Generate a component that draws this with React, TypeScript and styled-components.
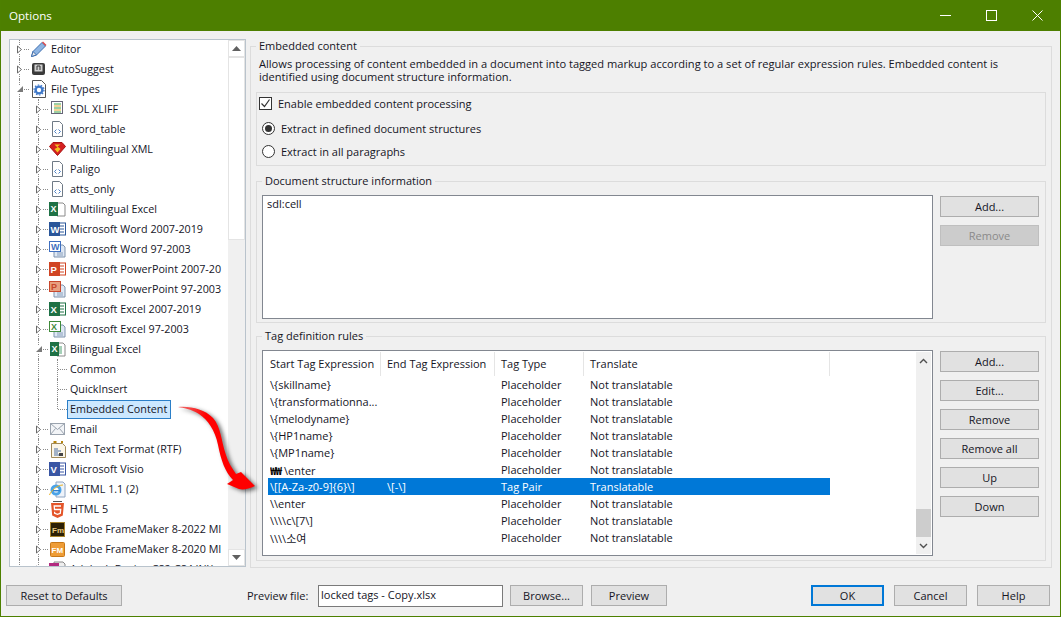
import React from "react";
import styled, { createGlobalStyle } from "styled-components";

const GlobalStyle = createGlobalStyle`
  html, body {
    margin: 0;
    padding: 0;
    background: #f0f0f0;
  }
  * {
    box-sizing: border-box;
  }
`;

const Window = styled.div`
  position: relative;
  width: 1061px;
  height: 617px;
  display: flex;
  flex-direction: column;
  overflow: hidden;
  background: #f0f0f0;
  border: 1px solid #4d8000;
  border-top: 0;
  font-family: "Open Sans", "Noto Sans CJK KR", sans-serif;
  font-size: 11px;
  color: #15151f;
`;

const TitleBar = styled.div`
  height: 31px;
  flex: none;
  display: flex;
  align-items: center;
  justify-content: space-between;
  background: #4d7f00;
  color: #fff;
  padding-left: 8px;
  font-size: 11.6px;
`;

const WinControls = styled.div`
  display: flex;
  height: 100%;
`;

const WinControl = styled.div`
  width: 46px;
  height: 100%;
  display: flex;
  align-items: center;
  justify-content: center;
`;

const Main = styled.div`
  flex: none;
  display: flex;
  gap: 4px;
  padding: 8px 8px 0;
  height: 536px;
`;

const Tree = styled.div`
  width: 237px;
  height: 528px;
  flex: none;
  display: flex;
  background: #fff;
  border: 1px solid #b9c3cc;
  overflow: hidden;
`;

const TreeList = styled.div`
  flex: 1;
  min-width: 0;
  margin-top: -1px;
  overflow: hidden;
  font-size: 10.75px;
`;

const TreeRow = styled.div`
  height: 20px;
  display: flex;
  align-items: center;
  white-space: nowrap;
`;

const Indent = styled.span`
  position: relative;
  width: 19px;
  height: 100%;
  flex: none;
  &::before {
    content: "";
    position: absolute;
    left: 9px;
    top: 0;
    bottom: 0;
    border-left: 1px dotted #8a8a8a;
  }
`;

const Expander = styled.span<{ $last?: boolean }>`
  position: relative;
  width: 19px;
  height: 100%;
  flex: none;
  display: flex;
  align-items: center;
  justify-content: center;
  &::before {
    content: "";
    position: absolute;
    left: 9px;
    top: 0;
    bottom: ${(p) => (p.$last ? "50%" : "0")};
    border-left: 1px dotted #8a8a8a;
  }
  &::after {
    content: "";
    position: absolute;
    left: 10px;
    right: 0;
    top: 50%;
    border-top: 1px dotted #8a8a8a;
  }
  svg {
    position: relative;
    z-index: 1;
    background: #fff;
  }
`;

const IconSlot = styled.span`
  width: 17px;
  height: 18px;
  margin-left: 1px;
  flex: none;
  display: flex;
  align-items: center;
  justify-content: center;
`;

const RowLabel = styled.span<{ $selected?: boolean; $leaf?: boolean }>`
  margin-left: ${(p) => (p.$leaf ? "0" : "1px")};
  padding: ${(p) => (p.$selected ? "0 3px 0 2px" : "0 2px")};
  line-height: 16px;
  height: 19px;
  border: 1px solid ${(p) => (p.$selected ? "#2b7fc8" : "transparent")};
  background: ${(p) => (p.$selected ? "#cce8ff" : "transparent")};
`;

const VScroll = styled.div`
  width: 17px;
  flex: none;
  display: flex;
  flex-direction: column;
  background: #f0f0f0;
`;

const ScrollBtn = styled.div`
  height: 17px;
  flex: none;
  background: #fff;
  border: 1px solid #e4e4e4;
  display: flex;
  align-items: center;
  justify-content: center;
`;

const ScrollThumb = styled.div`
  height: 183px;
  flex: none;
  background: #fff;
  border: 1px solid #e4e4e4;
`;

const ScrollTrack = styled.div`
  flex: 1;
`;

const Group = styled.fieldset<{ $h: number; $gap?: number }>`
  margin: ${(p) => p.$gap ?? 0}px 0 0;
  min-width: 0;
  height: ${(p) => p.$h}px;
  padding: 0 5px;
  border: 1px solid #dcdcdc;
  display: block;
`;

const Legend = styled.legend`
  margin-left: 0;
  padding: 0 3px;
  line-height: 14px;
`;

const RightPanel = styled.div`
  flex: 1;
  min-width: 0;
`;

const Description = styled.p`
  margin: 0 0 7px 3px;
  padding-top: 4px;
  line-height: 13px;
  height: 32px;
  font-size: 11.1px;
`;

const OptionsBox = styled.div`
  height: 74px;
  border: 1px solid #dcdcdc;
  padding: 0 0 0 2px;
  margin-bottom: 8px;
`;

const OptionRow = styled.label<{ $radio?: boolean }>`
  height: ${(p) => (p.$radio ? "23px" : "21px")};
  margin-bottom: ${(p) => (p.$radio ? "0" : "3px")};
  display: flex;
  align-items: center;
  gap: 6px;
  padding-left: ${(p) => (p.$radio ? "3px" : "0")};
`;

const CheckBox = styled.span`
  width: 13px;
  height: 13px;
  border: 1px solid #333;
  background: #fff;
  display: flex;
  align-items: center;
  justify-content: center;
`;

const Radio = styled.span<{ $on?: boolean }>`
  width: 13px;
  height: 13px;
  border-radius: 50%;
  border: 1px solid #333;
  background: #fff;
  display: flex;
  align-items: center;
  justify-content: center;
  &::after {
    content: "";
    width: 7px;
    height: 7px;
    border-radius: 50%;
    background: ${(p) => (p.$on ? "#333" : "transparent")};
  }
`;

const GroupBody = styled.div`
  display: flex;
  gap: 7px;
  padding-top: 7px;
`;

const TextBox = styled.div`
  width: 671px;
  height: 124px;
  flex: none;
  background: #fff;
  border: 1px solid #828790;
  padding: 0 4px;
  line-height: 15px;
`;

const ButtonColumn = styled.div`
  display: flex;
  flex-direction: column;
  gap: 8px;
  padding-top: 1px;
`;

const DialogButton = styled.button<{ $w?: number; $primary?: boolean }>`
  width: ${(p) => p.$w ?? 99}px;
  height: 21px;
  flex: none;
  padding: 0;
  background: #e1e1e1;
  border: 1px solid ${(p) => (p.$primary ? "#0078d7" : "#adadad")};
  box-shadow: ${(p) => (p.$primary ? "inset 0 0 0 1px #0078d7" : "none")};
  color: #15151f;
  font: inherit;
  &:disabled {
    background: #cccccc;
    border-color: #bfbfbf;
    color: #8a8a8a;
  }
`;

const RulesBox = styled.div`
  width: 671px;
  height: 206px;
  flex: none;
  display: flex;
  background: #fff;
  border: 1px solid #828790;
  padding: 1px 0;
`;

const RulesTable = styled.div`
  flex: 1;
  min-width: 0;
`;

const RulesHead = styled.div`
  display: grid;
  grid-template-columns: 118px 114px 89px 246px;
  height: 24px;
  align-items: stretch;
`;

const HeadCell = styled.div<{ $first?: boolean }>`
  display: flex;
  align-items: center;
  padding-left: ${(p) => (p.$first ? "7px" : "6px")};
  padding-bottom: 2px;
  border-right: 1px solid #e5e5e5;
  white-space: nowrap;
`;

const RuleRow = styled.div<{ $selected?: boolean }>`
  display: grid;
  grid-template-columns: 113px 114px 89px 246px;
  height: 17px;
  margin-left: 5px;
  width: 562px;
  align-items: center;
  white-space: nowrap;
  background: ${(p) => (p.$selected ? "#0078d7" : "transparent")};
  color: ${(p) => (p.$selected ? "#fff" : "inherit")};
`;

const RuleCell = styled.span<{ $first?: boolean }>`
  padding-left: ${(p) => (p.$first ? "2px" : "6px")};
  overflow: hidden;
`;

const WonMark = styled.span`
  display: inline-block;
  width: 14px;
  font-weight: 700;
  letter-spacing: -1px;
  color: #000;
  overflow: hidden;
  vertical-align: bottom;
`;

const ListScroll = styled.div`
  width: 15px;
  margin-right: 1px;
  flex: none;
  display: flex;
  flex-direction: column;
  background: #f0f0f0;
`;

const ListScrollBtn = styled.div`
  height: 17px;
  flex: none;
  display: flex;
  align-items: center;
  justify-content: center;
`;

const ListScrollTrack = styled.div`
  flex: 1;
  display: flex;
  flex-direction: column;
  justify-content: flex-end;
`;

const ListScrollThumb = styled.div`
  height: 28px;
  background: #cdcdcd;
`;

const Footer = styled.div`
  flex: 1;
  display: flex;
  align-items: flex-start;
  padding: 18px 10px 0 5px;
`;

const ResetButton = styled(DialogButton)`
  width: 116px;
`;

const PreviewArea = styled.div`
  display: flex;
  align-items: flex-start;
  margin-left: 125px;
  gap: 7px;
`;

const PreviewLabel = styled.span`
  width: 64px;
  line-height: 21px;
`;

const PreviewInput = styled.div`
  width: 185px;
  height: 22px;
  background: #fff;
  border: 1px solid #7a7a7a;
  padding-left: 2px;
  line-height: 17px;
`;

const PreviewButtons = styled.div`
  display: flex;
  gap: 8px;
`;

const DialogActions = styled.div`
  display: flex;
  gap: 10px;
  margin-left: auto;
`;

const CurvedArrow = styled.svg`
  position: absolute;
  left: 170px;
  top: 400px;
  z-index: 5;
  filter: drop-shadow(3px 2px 2px rgba(0, 0, 0, 0.55));
`;

type IconKind =
  | "pencil" | "key" | "gear" | "xliff" | "xml" | "shield" | "mlexcel" | "word" | "word97"
  | "ppt" | "ppt97" | "excel" | "excel97" | "biexcel" | "mail" | "rtf" | "visio" | "ie"
  | "html5" | "fm" | "fm2" | "indd";

const DocBack = () => (
  <path d="M2.5 .5h7l3 3v12h-10z" fill="#fff" stroke="#6f7a86" />
);

const TreeIcon: React.FC<{ kind: IconKind }> = ({ kind }) => {
  switch (kind) {
    case "pencil":
      return (
        <svg width="17" height="17" viewBox="0 0 17 17">
          <path d="M1.5 15.5l1.5-5L12 1.5l3.5 3.5-9 9z" fill="#8db4e2" stroke="#3f6fb0" />
          <path d="M1.5 15.5l1.5-5 3.5 3.5z" fill="#e8e8e8" stroke="#3f6fb0" />
          <path d="M12 1.5l3.5 3.5 1-1-3.5-3.5z" fill="#d9484c" />
        </svg>
      );
    case "key":
      return (
        <svg width="16" height="16" viewBox="0 0 16 16">
          <rect x="1" y="2" width="13" height="12" rx="2" fill="#3a3a3a" />
          <rect x="3.5" y="3.5" width="8" height="7" fill="#cfcfcf" />
          <path d="M6 9V5h3v4" fill="none" stroke="#333" />
        </svg>
      );
    case "gear":
      return (
        <svg width="16" height="18" viewBox="0 0 16 18">
          <path d="M1.5 .5h9l4 4v13h-13z" fill="#fff" stroke="#555" />
          <circle cx="8" cy="10" r="3.4" fill="none" stroke="#3f78c8" strokeWidth="2.4" />
          <circle cx="8" cy="10" r="5" fill="none" stroke="#3f78c8" strokeWidth="1.2" strokeDasharray="1.5 1.6" />
        </svg>
      );
    case "xliff":
      return (
        <svg width="14" height="16" viewBox="0 0 14 16">
          <rect x=".5" y=".5" width="11" height="12" fill="#fff" stroke="#667" />
          <path d="M3 3h7" stroke="#3aa048" />
          <path d="M3 5h7" stroke="#e8a82c" />
          <path d="M3 7h7" stroke="#3aa048" />
          <path d="M3 9h7" stroke="#e8a82c" />
          <path d="M3 11h7" stroke="#3aa048" />
        </svg>
      );
    case "xml":
      return (
        <svg width="15" height="16" viewBox="0 0 15 16">
          <DocBack />
          <path d="M6.5 8.5l-2 2 2 2M8.5 8.5l2 2-2 2" fill="none" stroke="#4a7fc4" />
        </svg>
      );
    case "shield":
      return (
        <svg width="17" height="14" viewBox="0 0 17 14">
          <path d="M4 .5h9l3.5 4L8.5 13.5.5 4.5z" fill="#d42020" stroke="#a81010" />
          <path d="M5.5 2.5h6L8.5 4.5l3 2.5-3 3.5L5.5 7l3-1.5z" fill="#f4c020" />
        </svg>
      );
    case "mlexcel":
    case "biexcel":
      return (
        <svg width="17" height="16" viewBox="0 0 17 16">
          <path d="M8 2h6l2 2v11H8z" fill="#fff" stroke="#8a8a8a" />
          {kind === "biexcel" && <rect x="9" y="5" width="4" height="8" fill="#a5d0b8" />}
          <rect x={kind === "biexcel" ? 1 : 0} y="1" width="9" height="14" fill="#1e7145" />
          <text x={kind === "biexcel" ? 2.5 : 1.5} y="11" fontSize="9" fontWeight="700" fill="#fff" fontFamily="Liberation Sans">X</text>
        </svg>
      );
    case "word":
    case "excel":
    case "ppt":
    case "visio": {
      const fill = kind === "word" ? "#2a5699" : kind === "excel" ? "#1e7145" : kind === "ppt" ? "#d04423" : "#3955a3";
      const letter = kind === "word" ? "W" : kind === "excel" ? "X" : kind === "ppt" ? "P" : "V";
      return (
        <svg width="17" height="16" viewBox="0 0 17 16">
          <rect x="9" y="2" width="7.5" height="12" fill="#fff" stroke={fill} />
          <path d="M10.5 5h4.5M10.5 8h4.5M10.5 11h4.5" stroke={fill} />
          <rect x="0" y="1" width="11" height="14" fill={fill} />
          <text x="1.5" y="11.5" fontSize="9.5" fontWeight="700" fill="#fff" fontFamily="Liberation Sans">{letter}</text>
        </svg>
      );
    }
    case "word97":
    case "ppt97":
    case "excel97": {
      const fill = kind === "word97" ? "#3f6fc0" : kind === "ppt97" ? "#c9472c" : "#3f8a3a";
      const letter = kind === "word97" ? "W" : kind === "ppt97" ? "P" : "X";
      return (
        <svg width="17" height="17" viewBox="0 0 17 17">
          <path d="M5 4h9l2 2v10H5z" fill="#dfe8f4" stroke="#7f93ad" />
          <path d="M8 12h6M8 14h6" stroke="#8aa0bc" />
          <rect x=".5" y=".5" width="11" height="10" fill={kind === "ppt97" ? "#e8a080" : "#fff"} stroke={fill} />
          <text x="2" y="9" fontSize="9" fontWeight="700" fill={fill} fontFamily="Liberation Sans">{letter}</text>
        </svg>
      );
    }
    case "mail":
      return (
        <svg width="15" height="12" viewBox="0 0 15 12">
          <rect x=".5" y=".5" width="14" height="11" fill="#f2f4f7" stroke="#9aa3ae" />
          <path d="M.5.5l7 6 7-6M.5 11.5l5-6M14.5 11.5l-5-6" fill="none" stroke="#9aa3ae" />
        </svg>
      );
    case "rtf":
      return (
        <svg width="16" height="17" viewBox="0 0 16 17">
          <path d="M1.5 2.5h11l3 3v11h-14z" fill="#fbf6e8" stroke="#a08a5a" />
          <path d="M3.5 1h3M11 1h2" stroke="#b8860b" strokeWidth="2" />
          <path d="M4 8h4M4 10h7M4 12h4M4 14h7" stroke="#4a6fa5" />
          <rect x="9" y="12" width="4" height="3" fill="#444" />
        </svg>
      );
    case "ie":
      return (
        <svg width="17" height="17" viewBox="0 0 17 17">
          <path d="M7 1h7l2 2v13H7z" fill="#eef3fa" stroke="#8ea4c2" />
          <circle cx="7" cy="9" r="5.5" fill="#4aa3e8" />
          <circle cx="7" cy="9" r="2.6" fill="#fff" />
          <rect x="4" y="9" width="7" height="1.4" fill="#2f7fd0" />
          <path d="M.5 14C2 10 8 4 14 4" fill="none" stroke="#e8b020" />
        </svg>
      );
    case "html5":
      return (
        <svg width="13" height="17" viewBox="0 0 13 17">
          <path d="M2 .5h9" stroke="#555" />
          <path d="M0 2h13l-1.2 12.5L6.5 17 1.2 14.5z" fill="#e4552a" />
          <path d="M10 5H3.2l.3 3.5h6.2l-.4 3.8-2.8 1-2.8-1-.1-1.6" fill="none" stroke="#fff" strokeWidth="1.3" />
        </svg>
      );
    case "fm":
      return (
        <svg width="15" height="15" viewBox="0 0 15 15">
          <rect x=".5" y=".5" width="14" height="14" fill="#2c2006" stroke="#a8842c" />
          <text x="2" y="10.5" fontSize="8" fontWeight="700" fill="#e8c880" fontFamily="Liberation Sans">Fm</text>
        </svg>
      );
    case "fm2":
      return (
        <svg width="15" height="15" viewBox="0 0 15 15">
          <rect x=".5" y=".5" width="14" height="14" rx="1" fill="#ee9c36" stroke="#c87818" />
          <text x="1.5" y="10.5" fontSize="8" fontWeight="700" fill="#fff" fontFamily="Liberation Sans">FM</text>
        </svg>
      );
    case "indd":
      return (
        <svg width="17" height="16" viewBox="0 0 17 16">
          <path d="M5 1h9l2 2v12H5z" fill="#eee" stroke="#888" />
          <rect x="0" y="2" width="10" height="8" fill="#b32a80" />
        </svg>
      );
  }
};

const ClosedArrow = () => (
  <svg width="7" height="9" viewBox="0 0 7 9">
    <path d="M1.5 1v7l4-3.5z" fill="#fff" stroke="#6a6a6a" />
  </svg>
);

const OpenArrow = () => (
  <svg width="8" height="8" viewBox="0 0 8 8">
    <path d="M7 1v6H1z" fill="#7a7a7a" />
  </svg>
);

type Node = {
  label: string;
  depth: number;
  icon?: IconKind;
  open?: boolean;
  selected?: boolean;
  last?: boolean;
};

const nodes: Node[] = [
  { label: "Editor", depth: 0, icon: "pencil" },
  { label: "AutoSuggest", depth: 0, icon: "key" },
  { label: "File Types", depth: 0, icon: "gear", open: true },
  { label: "SDL XLIFF", depth: 1, icon: "xliff" },
  { label: "word_table", depth: 1, icon: "xml" },
  { label: "Multilingual XML", depth: 1, icon: "shield" },
  { label: "Paligo", depth: 1, icon: "xml" },
  { label: "atts_only", depth: 1, icon: "xml" },
  { label: "Multilingual Excel", depth: 1, icon: "mlexcel" },
  { label: "Microsoft Word 2007-2019", depth: 1, icon: "word" },
  { label: "Microsoft Word 97-2003", depth: 1, icon: "word97" },
  { label: "Microsoft PowerPoint 2007-20", depth: 1, icon: "ppt" },
  { label: "Microsoft PowerPoint 97-2003", depth: 1, icon: "ppt97" },
  { label: "Microsoft Excel 2007-2019", depth: 1, icon: "excel" },
  { label: "Microsoft Excel 97-2003", depth: 1, icon: "excel97" },
  { label: "Bilingual Excel", depth: 1, icon: "biexcel", open: true },
  { label: "Common", depth: 2 },
  { label: "QuickInsert", depth: 2 },
  { label: "Embedded Content", depth: 2, selected: true, last: true },
  { label: "Email", depth: 1, icon: "mail" },
  { label: "Rich Text Format (RTF)", depth: 1, icon: "rtf" },
  { label: "Microsoft Visio", depth: 1, icon: "visio" },
  { label: "XHTML 1.1 (2)", depth: 1, icon: "ie" },
  { label: "HTML 5", depth: 1, icon: "html5" },
  { label: "Adobe FrameMaker 8-2022 MI", depth: 1, icon: "fm" },
  { label: "Adobe FrameMaker 8-2020 MI", depth: 1, icon: "fm2" },
  { label: "Adobe InDesign CS2-CS4 INX", depth: 1, icon: "indd" },
];

type Rule = { start: string; won?: boolean; end?: string; type: string; translate: string; selected?: boolean };

const rules: Rule[] = [
  { start: "\\{skillname}", type: "Placeholder", translate: "Not translatable" },
  { start: "\\{transformationna...", type: "Placeholder", translate: "Not translatable" },
  { start: "\\{melodyname}", type: "Placeholder", translate: "Not translatable" },
  { start: "\\{HP1name}", type: "Placeholder", translate: "Not translatable" },
  { start: "\\{MP1name}", type: "Placeholder", translate: "Not translatable" },
  { start: "\\enter", won: true, type: "Placeholder", translate: "Not translatable" },
  { start: "\\[[A-Za-z0-9]{6}\\]", end: "\\[-\\]", type: "Tag Pair", translate: "Translatable", selected: true },
  { start: "\\\\enter", type: "Placeholder", translate: "Not translatable" },
  { start: "\\\\\\\\c\\[7\\]", type: "Placeholder", translate: "Not translatable" },
  { start: "\\\\\\\\소여", type: "Placeholder", translate: "Not translatable" },
];

const ruleButtons = ["Add...", "Edit...", "Remove", "Remove all", "Up", "Down"];

export default function App() {
  return (
    <Window>
      <GlobalStyle />
      <TitleBar>
        <span>Options</span>
        <WinControls>
          <WinControl>
            <svg width="11" height="11" viewBox="0 0 11 11"><path d="M0 5.5h11" stroke="#fff" /></svg>
          </WinControl>
          <WinControl>
            <svg width="11" height="11" viewBox="0 0 11 11"><rect x=".5" y=".5" width="10" height="10" fill="none" stroke="#fff" /></svg>
          </WinControl>
          <WinControl>
            <svg width="11" height="11" viewBox="0 0 11 11"><path d="M.5.5l10 10M10.5.5l-10 10" stroke="#fff" /></svg>
          </WinControl>
        </WinControls>
      </TitleBar>

      <Main>
        <Tree>
          <TreeList>
            {nodes.map((n) => (
              <TreeRow key={n.label}>
                {Array.from({ length: n.depth }).map((_, i) => (
                  <Indent key={i} />
                ))}
                <Expander $last={n.last}>
                  {n.depth < 2 && (n.open ? <OpenArrow /> : <ClosedArrow />)}
                </Expander>
                {n.icon && (
                  <IconSlot>
                    <TreeIcon kind={n.icon} />
                  </IconSlot>
                )}
                <RowLabel $selected={n.selected} $leaf={!n.icon}>{n.label}</RowLabel>
              </TreeRow>
            ))}
          </TreeList>
          <VScroll>
            <ScrollBtn>
              <svg width="9" height="5" viewBox="0 0 9 5"><path d="M4.5 0L9 5H0z" fill="#606060" /></svg>
            </ScrollBtn>
            <ScrollThumb />
            <ScrollTrack />
            <ScrollBtn>
              <svg width="9" height="5" viewBox="0 0 9 5"><path d="M4.5 5L9 0H0z" fill="#606060" /></svg>
            </ScrollBtn>
          </VScroll>
        </Tree>

        <RightPanel>
          <Group $h={529}>
            <Legend>Embedded content</Legend>
            <Description>
              Allows processing of content embedded in a document into tagged markup according to a set of regular expression rules. Embedded content is identified using document structure information.
            </Description>
            <OptionsBox>
              <OptionRow>
                <CheckBox>
                  <svg width="11" height="11" viewBox="0 0 11 11"><path d="M1.5 5.5l3 3 5-7" fill="none" stroke="#333" strokeWidth="1.2" /></svg>
                </CheckBox>
                Enable embedded content processing
              </OptionRow>
              <OptionRow $radio>
                <Radio $on />
                Extract in defined document structures
              </OptionRow>
              <OptionRow $radio>
                <Radio />
                Extract in all paragraphs
              </OptionRow>
            </OptionsBox>

            <Group $h={149}>
              <Legend>Document structure information</Legend>
              <GroupBody>
                <TextBox>sdl:cell</TextBox>
                <ButtonColumn>
                  <DialogButton>Add...</DialogButton>
                  <DialogButton disabled>Remove</DialogButton>
                </ButtonColumn>
              </GroupBody>
            </Group>

            <Group $h={232} $gap={6}>
              <Legend>Tag definition rules</Legend>
              <GroupBody>
                <RulesBox>
                  <RulesTable>
                    <RulesHead>
                      <HeadCell $first>Start Tag Expression</HeadCell>
                      <HeadCell>End Tag Expression</HeadCell>
                      <HeadCell>Tag Type</HeadCell>
                      <HeadCell>Translate</HeadCell>
                    </RulesHead>
                    {rules.map((r) => (
                      <RuleRow key={r.start} $selected={r.selected}>
                        <RuleCell $first>
                          {r.won && <WonMark>₩₩</WonMark>}
                          {r.start}
                        </RuleCell>
                        <RuleCell>{r.end}</RuleCell>
                        <RuleCell>{r.type}</RuleCell>
                        <RuleCell>{r.translate}</RuleCell>
                      </RuleRow>
                    ))}
                  </RulesTable>
                  <ListScroll>
                    <ListScrollBtn>
                      <svg width="9" height="6" viewBox="0 0 9 6"><path d="M1 5l3.5-3.5L8 5" fill="none" stroke="#505050" strokeWidth="1.4" /></svg>
                    </ListScrollBtn>
                    <ListScrollTrack>
                      <ListScrollThumb />
                    </ListScrollTrack>
                    <ListScrollBtn>
                      <svg width="9" height="6" viewBox="0 0 9 6"><path d="M1 1l3.5 3.5L8 1" fill="none" stroke="#505050" strokeWidth="1.4" /></svg>
                    </ListScrollBtn>
                  </ListScroll>
                </RulesBox>
                <ButtonColumn>
                  {ruleButtons.map((b) => (
                    <DialogButton key={b}>{b}</DialogButton>
                  ))}
                </ButtonColumn>
              </GroupBody>
            </Group>
          </Group>
        </RightPanel>
      </Main>

      <Footer>
        <ResetButton>Reset to Defaults</ResetButton>
        <PreviewArea>
          <PreviewLabel>Preview file:</PreviewLabel>
          <PreviewInput>locked tags - Copy.xlsx</PreviewInput>
          <PreviewButtons>
            <DialogButton $w={73}>Browse...</DialogButton>
            <DialogButton $w={76}>Preview</DialogButton>
          </PreviewButtons>
        </PreviewArea>
        <DialogActions>
          <DialogButton $w={73} $primary>OK</DialogButton>
          <DialogButton $w={73}>Cancel</DialogButton>
          <DialogButton $w={73}>Help</DialogButton>
        </DialogActions>
      </Footer>

      <CurvedArrow width="95" height="105" viewBox="0 0 95 105">
        <defs>
          <linearGradient id="arrowFill" x1="0" y1="0" x2="1" y2="0.4">
            <stop offset="0" stopColor="#f07070" />
            <stop offset="0.35" stopColor="#ff0000" />
            <stop offset="1" stopColor="#ff0000" />
          </linearGradient>
        </defs>
        <path
          d="M7 7C20 6 33 9 42 18C50 27 50 40 55 55C57 62 61 68 65 74L70 72L84 86C78 89 72 90 68 89L56 84L62 80C54 72 50 60 47 45C44 30 37 20 28 14C20 9 12 8 7 7Z"
          fill="url(#arrowFill)"
        />
      </CurvedArrow>
    </Window>
  );
}
